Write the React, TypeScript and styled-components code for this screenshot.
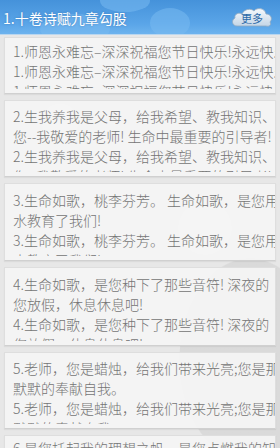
import React from "react";
import styled, { createGlobalStyle } from "styled-components";

const Global = createGlobalStyle`
  html, body { margin: 0; padding: 0; }
  body {
    width: 280px; height: 448px; overflow: hidden;
    background: #e6e6e6;
    font-family: "Noto Sans CJK SC", "Noto Sans", sans-serif;
  }
`;

const Page = styled.div`
  width: 280px;
  height: 448px;
  overflow: hidden;
  display: flex;
  flex-direction: column;
  background:
    radial-gradient(circle at 205px 228px, rgba(255,255,255,0.6) 0 26px, transparent 27px),
    radial-gradient(circle at 60px 122px, rgba(255,255,255,0.35) 0 18px, transparent 19px),
    radial-gradient(ellipse at 250px 360px, rgba(205,205,205,0.5) 0 70px, transparent 71px),
    #e7e7e7;
`;

const Header = styled.div`
  height: 34px;
  flex: none;
  display: flex;
  align-items: center;
  justify-content: space-between;
  padding: 0 7px 0 3px;
  position: relative;
  overflow: hidden;
  background: linear-gradient(180deg, #4592da 0%, #5aa5e8 70%, #6db3ee 100%);
  border-bottom: 1px solid #b9d6ef;
`;

const MapBlob = styled.div<{ $l: number; $t: number; $w: number; $h: number }>`
  position: absolute;
  left: ${(p) => p.$l}px;
  top: ${(p) => p.$t}px;
  width: ${(p) => p.$w}px;
  height: ${(p) => p.$h}px;
  border-radius: 50%;
  background: rgba(120, 185, 240, 0.55);
`;

const Title = styled.div`
  position: relative;
  color: #ffffff;
  font-size: 14px;
  padding-top: 2px;
  text-shadow: 0 0 2px rgba(40, 90, 150, 0.5);
`;

const More = styled.div`
  position: relative;
  width: 42px;
  height: 22px;
  display: flex;
  align-items: center;
  justify-content: center;
`;

const CloudSvg = styled.svg`
  position: absolute;
  inset: 0;
`;

const MoreText = styled.span`
  position: relative;
  font-size: 11px;
  color: #2d6aa8;
  padding-top: 2px;
`;

const List = styled.div`
  display: flex;
  flex-direction: column;
  gap: 6px;
  padding: 2px 4px 0 4px;
`;

const Card = styled.div<{ $pt: number }>`
  flex: none;
  box-sizing: border-box;
  padding: ${(p) => p.$pt}px 0 4px 8px;
  background: rgba(245, 245, 245, 0.9);
  border: 1px solid #dedede;
  border-bottom-color: #d0d0d0;
  box-shadow: 0 1px 1px rgba(0, 0, 0, 0.05);
`;

const Clip = styled.div<{ $h: number }>`
  height: ${(p) => p.$h}px;
  overflow: hidden;
`;

const Line = styled.div`
  white-space: nowrap;
  font-size: 14px;
  font-weight: 300;
  line-height: 20px;
  color: #747474;
`;

const cards: { h: number; pt: number; lines: string[] }[] = [
  {
    h: 48,
    pt: 3,
    lines: [
      "1.师恩永难忘–深深祝福您节日快乐!永远快乐!",
      "1.师恩永难忘–深深祝福您节日快乐!永远快乐!",
      "1.师恩永难忘–深深祝福您节日快乐!永远快乐!",
    ],
  },
  {
    h: 66,
    pt: 5,
    lines: [
      "2.生我养我是父母，给我希望、教我知识、",
      "您--我敬爱的老师! 生命中最重要的引导者!",
      "2.生我养我是父母，给我希望、教我知识、",
      "您--我敬爱的老师! 生命中最重要的引导者!",
    ],
  },
  {
    h: 66,
    pt: 6,
    lines: [
      "3.生命如歌，桃李芬芳。 生命如歌，是您用汗",
      "水教育了我们!",
      "3.生命如歌，桃李芬芳。 生命如歌，是您用汗",
      "水教育了我们!",
    ],
  },
  {
    h: 67,
    pt: 6,
    lines: [
      "4.生命如歌，是您种下了那些音符! 深夜的",
      "您放假，休息休息吧!",
      "4.生命如歌，是您种下了那些音符! 深夜的",
      "您放假，休息休息吧!",
    ],
  },
  {
    h: 66,
    pt: 5,
    lines: [
      "5.老师，您是蜡烛，给我们带来光亮;您是那",
      "默默的奉献自我。",
      "5.老师，您是蜡烛，给我们带来光亮;您是那",
      "默默的奉献自我。",
    ],
  },
  {
    h: 64,
    pt: 2,
    lines: [
      "6.是您托起我的理想之帆·是您点燃我的知识",
      "之火!",
    ],
  },
];

export default function App() {
  return (
    <>
      <Global />
      <Page>
        <Header>
          <MapBlob $l={40} $t={14} $w={70} $h={30} />
          <MapBlob $l={100} $t={-10} $w={50} $h={22} />
          <MapBlob $l={150} $t={8} $w={40} $h={30} />
          <Title>1.十卷诗赋九章勾股</Title>
          <More>
            <CloudSvg width="42" height="22" viewBox="0 0 42 22">
              <defs>
                <linearGradient id="cg" x1="0" y1="0" x2="0" y2="1">
                  <stop offset="0" stopColor="#f6f9fc" />
                  <stop offset="1" stopColor="#c3d5e6" />
                </linearGradient>
              </defs>
              <path
                d="M6 20 C1 20 0 14 4 12 C3 8 8 6 11 8 C13 3 20 2 23 5 C26 1 34 2 35 8 C40 8 42 13 39 16 C41 19 38 21 35 20 Z"
                fill="url(#cg)"
                stroke="#8fa9c2"
                strokeWidth="0.8"
              />
            </CloudSvg>
            <MoreText>更多</MoreText>
          </More>
        </Header>
        <List>
          {cards.map((c, i) => (
            <Card key={i} $pt={c.pt}>
              <Clip $h={c.h}>
                {c.lines.map((l, j) => (
                  <Line key={j}>{l}</Line>
                ))}
              </Clip>
            </Card>
          ))}
        </List>
      </Page>
    </>
  );
}
